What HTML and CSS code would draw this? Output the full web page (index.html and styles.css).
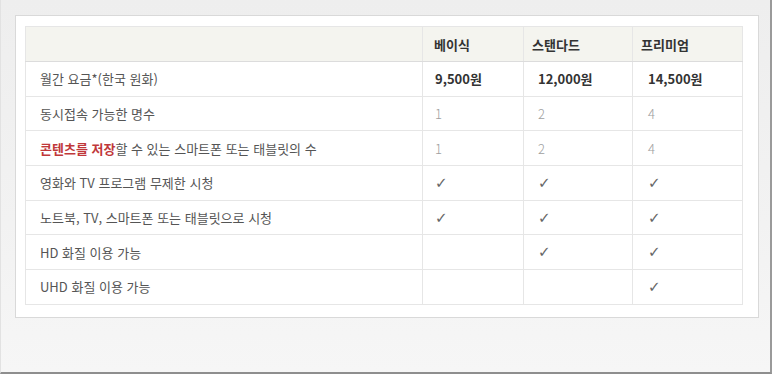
FILE: index.html
```html
<!DOCTYPE html>
<html lang="ko">
<head>
<meta charset="utf-8">
<title>요금제 비교</title>
<link rel="stylesheet" href="styles.css">
</head>
<body>
<div class="frame">
  <div class="panel">
    <table class="plans">
      <colgroup>
        <col class="c-feature"><col class="c-basic"><col class="c-std"><col class="c-prem">
      </colgroup>
      <thead>
        <tr>
          <th></th>
          <th class="h-basic">베이식</th>
          <th class="h-std">스탠다드</th>
          <th class="h-prem">프리미엄</th>
        </tr>
      </thead>
      <tbody>
        <tr class="price">
          <td>월간 요금*(한국 원화)</td>
          <td class="v-basic">9,500원</td>
          <td class="v-std">12,000원</td>
          <td class="v-prem">14,500원</td>
        </tr>
        <tr class="num">
          <td>동시접속 가능한 명수</td>
          <td class="v-basic">1</td>
          <td class="v-std">2</td>
          <td class="v-prem">4</td>
        </tr>
        <tr class="num">
          <td><span class="hl">콘텐츠를 저장</span>할 수 있는 스마트폰 또는 태블릿의 수</td>
          <td class="v-basic">1</td>
          <td class="v-std">2</td>
          <td class="v-prem">4</td>
        </tr>
        <tr class="chk">
          <td>영화와 TV 프로그램 무제한 시청</td>
          <td class="v-basic">✓</td>
          <td class="v-std">✓</td>
          <td class="v-prem">✓</td>
        </tr>
        <tr class="chk">
          <td>노트북, TV, 스마트폰 또는 태블릿으로 시청</td>
          <td class="v-basic">✓</td>
          <td class="v-std">✓</td>
          <td class="v-prem">✓</td>
        </tr>
        <tr class="chk">
          <td>HD 화질 이용 가능</td>
          <td class="v-basic"></td>
          <td class="v-std">✓</td>
          <td class="v-prem">✓</td>
        </tr>
        <tr class="chk">
          <td>UHD 화질 이용 가능</td>
          <td class="v-basic"></td>
          <td class="v-std"></td>
          <td class="v-prem">✓</td>
        </tr>
      </tbody>
    </table>
  </div>
</div>
</body>
</html>
```

FILE: styles.css
```css
html, body {
  margin: 0;
  padding: 0;
  background: #ffffff;
}

.frame {
  box-sizing: border-box;
  width: 772px;
  height: 374px;
  padding: 15px 0 0 15px;
  background: linear-gradient(180deg, #eeeeee 0%, #f2f2f2 60%, #f6f6f6 100%);
  border-left: 1px solid #e2e2e2;
  border-right: 2px solid #9a9a9a;
  border-bottom: 2px solid #8e8e8e;
  font-family: "Noto Sans CJK KR", "Noto Sans", sans-serif;
}

.panel {
  box-sizing: border-box;
  width: 744px;
  height: 303px;
  margin-left: -1px;
  padding: 10px 0 0 9px;
  background: #ffffff;
  border: 1px solid #d9d9d9;
}

.plans {
  border-collapse: collapse;
  table-layout: fixed;
  width: 718px;
  font-size: 13px;
  color: #555555;
  border: 1px solid #dcdcdc;
}

.c-feature { width: 397px; }
.c-basic { width: 101px; }
.c-std { width: 109px; }
.c-prem { width: 110px; }

.plans th,
.plans td {
  border: 1px solid #e6e6e6;
  padding: 0;
  text-align: left;
  vertical-align: middle;
  white-space: nowrap;
}

.plans thead tr { height: 35px; }
.plans tbody tr { height: 34.7px; }

.plans th {
  background: #f4f4ef;
  color: #333333;
  font-weight: 700;
  border-bottom: 1px solid #dcdcdc;
}

.plans td:first-child { padding-left: 14px; }

.h-basic { padding-left: 11px !important; }
.h-std { padding-left: 8px !important; }
.h-prem { padding-left: 8px !important; }

.v-basic { padding-left: 12px !important; }
.v-std { padding-left: 14px !important; }
.v-prem { padding-left: 15px !important; }

.price td:not(:first-child) {
  color: #333333;
  font-weight: 700;
  font-size: 13px;
}

.num td:not(:first-child) {
  color: #9e9e9e;
  font-weight: 300;
}

.chk td:not(:first-child) {
  color: #666666;
  font-family: "DejaVu Sans", sans-serif;
  font-size: 15px;
}

.hl {
  color: #c0383a;
  font-weight: 700;
}
```
